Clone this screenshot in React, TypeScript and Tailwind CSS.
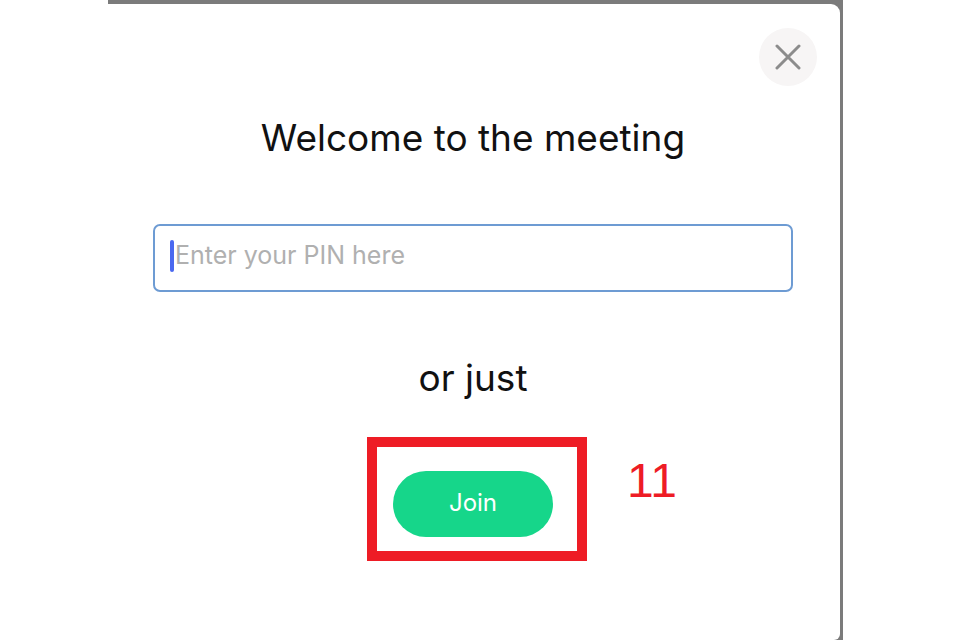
import React from "react";

const CloseIcon = () => (
  <svg width="26" height="26" viewBox="0 0 26 26" fill="none">
    <path d="M2 2L24 24M24 2L2 24" stroke="#8c8c8c" strokeWidth="3" strokeLinecap="round" />
  </svg>
);

export default function App() {
  return (
    <div className="w-[960px] h-[640px] bg-white overflow-hidden relative">
      <div className="ml-[108px] w-[735px] h-[640px] bg-[#7b7b7b] pt-[4px] pr-[3px]">
        {/* Modal */}
        <div
          className="relative h-full bg-white rounded-tr-[9px] rounded-br-[6px] flex flex-col items-center pr-[2px]"
          style={{ fontFamily: "Inter, 'Noto Sans', sans-serif" }}
        >
          <button className="absolute top-[24px] right-[23px] w-[58px] h-[58px] rounded-full bg-[#f7f5f5] flex items-center justify-center">
            <CloseIcon />
          </button>

          <h1 className="mt-[112px] text-[37px] leading-[44px] text-[#111]">
            Welcome to the meeting
          </h1>

          <div className="mt-[64px] w-[640px] h-[68px] border-2 border-[#6d9bd3] rounded-[7px] flex items-center pl-[15px] pb-[4px] gap-[1px]">
            <span className="w-[4px] h-[32px] rounded-full bg-[#4a68f0]" />
            <span className="text-[25px] text-[#b0b0b0]">Enter your PIN here</span>
          </div>

          <p className="mt-[64px] text-[37px] leading-[44px] text-[#111]">or just</p>

          <button className="mt-[71px] w-[160px] h-[66px] rounded-full bg-[#16d68a] text-white text-[24px] pb-[3px]">
            Join
          </button>
        </div>
      </div>

      {/* annotation overlay */}
      <div className="absolute left-[367px] top-[437px] w-[220px] h-[124px] border-[10px] border-[#ee1c25]" />
      <span
        className="absolute left-[627px] top-[452px] text-[48px] leading-[58px] text-[#ee1c25]"
        style={{ fontFamily: "'Liberation Sans', Arial, sans-serif" }}
      >
        11
      </span>
    </div>
  );
}
